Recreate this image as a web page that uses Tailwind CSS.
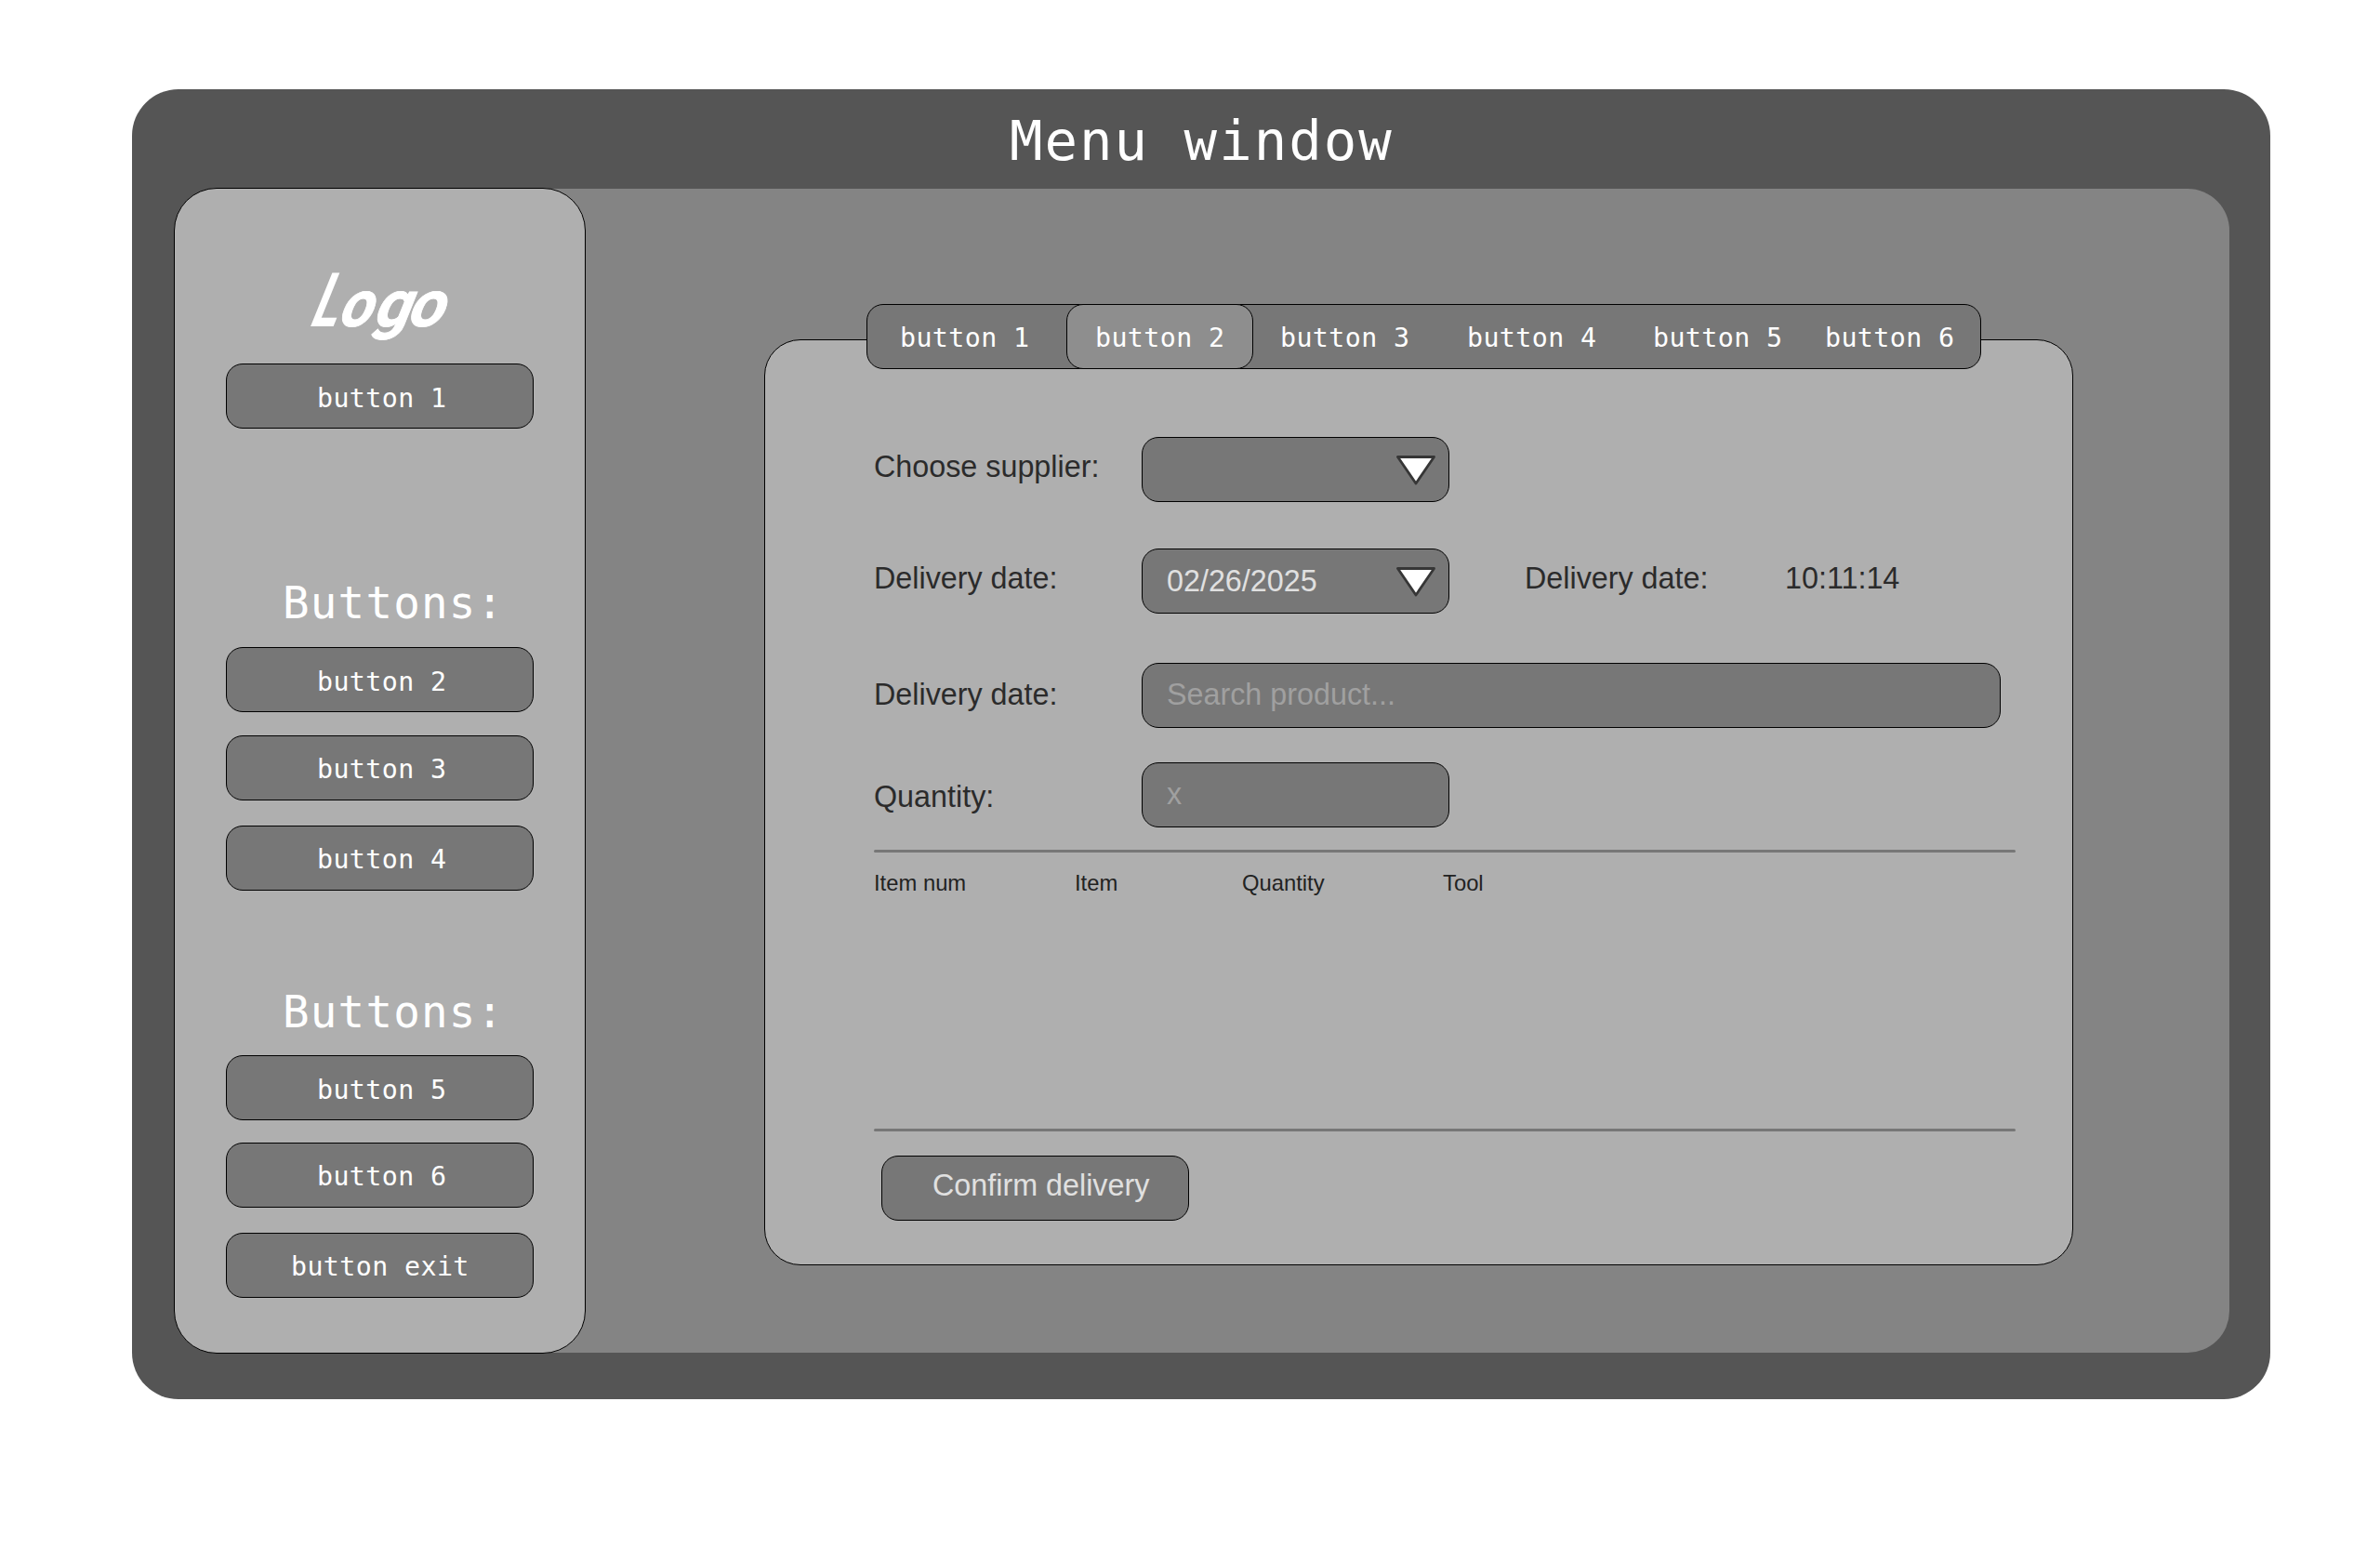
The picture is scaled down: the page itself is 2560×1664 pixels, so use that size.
<!DOCTYPE html>
<html lang="en">
<head>
<meta charset="utf-8">
<title>Menu window</title>
<script src="https://cdn.jsdelivr.net/npm/@tailwindcss/browser@4"></script>
</head>
<body class="bg-white w-[2560px] h-[1664px] overflow-hidden pt-24 pl-[142px] whitespace-nowrap font-['Liberation_Sans',sans-serif]">
<div class="w-[2300px] h-[1409px] rounded-[50px] bg-[#555555] flex flex-col">
  <header class="h-[107px] shrink-0 pt-[21px] pl-[944px]">
    <h1 class="font-['DejaVu_Sans_Mono',monospace] text-[59px] leading-[70px] tracking-[2px] text-white">Menu window</h1>
  </header>
  <div class="ml-[46px] w-[2210px] h-[1252px] rounded-[45px] bg-[#848484] flex">
    <!-- Sidebar -->
    <aside class="-ml-px -mt-px w-[443px] h-[1254px] shrink-0 rounded-[46px] border border-black bg-[#afafaf] pl-[55px] flex flex-col font-['DejaVu_Sans_Mono',monospace] text-[28.3px] tracking-[0.4px] text-white">
      <svg class="mt-[77px] ml-[85px] shrink-0 overflow-visible" width="160" height="100" viewBox="0 0 160 100" fill="#fff" stroke="#fff" font-family="Roboto, sans-serif" font-weight="700" letter-spacing="0">
        <g transform="translate(6 71) skewX(-22)">
          <text transform="scale(.66 1)" x="-5" y="0" font-size="81" stroke-width="0">L</text>
          <text transform="scale(.9 1)" x="30" y="0" font-size="70" stroke-width="0.8">o</text>
          <text transform="scale(.98 1)" x="66" y="0" font-size="70" stroke-width="0.8">g</text>
          <text transform="scale(.98 1)" x="103" y="0" font-size="70" stroke-width="0.8">o</text>
        </g>
      </svg>
      <button class="mt-[11px] w-[331px] h-[70px] shrink-0 rounded-[18px] border border-black bg-[#777777] pl-[97px] pt-[6px] text-left">button 1</button>
      <h2 class="mt-[158px] ml-[61px] h-[60px] leading-[60px] shrink-0 text-[47.5px] tracking-[1.2px]">Buttons:</h2>
      <button class="mt-[17px] w-[331px] h-[70px] shrink-0 rounded-[18px] border border-black bg-[#777777] pl-[97px] pt-[6px] text-left">button 2</button>
      <button class="mt-[25px] w-[331px] h-[70px] shrink-0 rounded-[18px] border border-black bg-[#777777] pl-[97px] pt-[5px] text-left">button 3</button>
      <button class="mt-[27px] w-[331px] h-[70px] shrink-0 rounded-[18px] border border-black bg-[#777777] pl-[97px] pt-[5px] text-left">button 4</button>
      <h2 class="mt-[101px] ml-[61px] h-[60px] leading-[60px] shrink-0 text-[47.5px] tracking-[1.2px]">Buttons:</h2>
      <button class="mt-[16px] w-[331px] h-[70px] shrink-0 rounded-[18px] border border-black bg-[#777777] pl-[97px] pt-[6px] text-left">button 5</button>
      <button class="mt-[24px] w-[331px] h-[70px] shrink-0 rounded-[18px] border border-black bg-[#777777] pl-[97px] pt-[4px] text-left">button 6</button>
      <button class="mt-[27px] w-[331px] h-[70px] shrink-0 rounded-[18px] border border-black bg-[#777777] pl-[69px] pt-[5px] text-left">button exit</button>
    </aside>

    <!-- Delivery panel -->
    <main class="relative mt-[162px] ml-[192px] w-[1408px] h-[996px] rounded-[39px] border border-black bg-[#afafaf] pt-[104px] pl-[117px] text-[32.3px] leading-[38px] text-[#2b2b2b]">
      <nav class="absolute left-[109px] top-[-39px] w-[1199px] h-[70px] rounded-[18px] border border-black bg-[#777777] flex items-center pt-[3px] font-['DejaVu_Sans_Mono',monospace] text-[28.3px] tracking-[0.4px] text-white">
        <span class="w-[214px] pl-[35px]">button 1</span>
        <span class="w-[201px] h-[70px] -mt-[3px] shrink-0 rounded-[18px] border border-black bg-[#8e8e8e] pl-[30px] pt-[2px] leading-[68px]">button 2</span>
        <span class="w-[200px] pl-[29px]">button 3</span>
        <span class="w-[200px] pl-[30px]">button 4</span>
        <span class="w-[185px] pl-[30px]">button 5</span>
        <span class="pl-[30px]">button 6</span>
      </nav>

      <div class="flex h-[70px]">
        <label class="w-[288px] mt-[13px]">Choose supplier:</label>
        <div class="w-[331px] h-[70px] rounded-[18px] border border-black bg-[#777777] pl-[272px] pt-[18px]">
          <svg width="44" height="34" viewBox="0 0 44 34"><path d="M2.5 2.5H41.5L22 31Z" fill="#fff" stroke="#363636" stroke-width="2.8" stroke-linejoin="round"/></svg>
        </div>
      </div>
      <div class="flex h-[70px] mt-[50px]">
        <label class="w-[288px] mt-[13px]">Delivery date:</label>
        <div class="w-[331px] h-[70px] rounded-[18px] border border-black bg-[#777777] flex pl-[26px] pt-[15px] text-[#e0e0e0]">
          <span class="w-[246px]">02/26/2025</span>
          <svg class="mt-[3px]" width="44" height="34" viewBox="0 0 44 34"><path d="M2.5 2.5H41.5L22 31Z" fill="#fff" stroke="#363636" stroke-width="2.8" stroke-linejoin="round"/></svg>
        </div>
        <span class="ml-[81px] mt-[13px] w-[280px]">Delivery date:</span>
        <span class="mt-[13px]">10:11:14</span>
      </div>
      <div class="flex h-[70px] mt-[53px]">
        <label class="w-[288px] mt-[15px]">Delivery date:</label>
        <div class="w-[924px] h-[70px] rounded-[18px] border border-black bg-[#777777] pl-[26px] pt-[14px] text-[#a0a0a0]">Search product...</div>
      </div>
      <div class="flex h-[70px] mt-[37px]">
        <label class="w-[288px] mt-[18px]">Quantity:</label>
        <div class="w-[331px] h-[70px] rounded-[18px] border border-black bg-[#777777] pl-[26px] pt-[14px] text-[#a0a0a0]">x</div>
      </div>
      <div class="mt-[24px] w-[1228px] h-[3px] rounded-full bg-[#777777]"></div>
      <div class="mt-[19px] h-[28px] leading-[28px] flex text-[23.8px] text-[#222222]">
        <span class="w-[216px]">Item num</span>
        <span class="w-[180px]">Item</span>
        <span class="w-[216px]">Quantity</span>
        <span>Tool</span>
      </div>
      <div class="mt-[250px] w-[1228px] h-[3px] rounded-full bg-[#777777]"></div>
      <button class="block mt-[26px] ml-[8px] w-[331px] h-[70px] rounded-[18px] border border-black bg-[#777777] pl-[54px] pb-[7px] text-left text-[#e0e0e0]">Confirm delivery</button>
    </main>
  </div>
</div>
</body>
</html>
